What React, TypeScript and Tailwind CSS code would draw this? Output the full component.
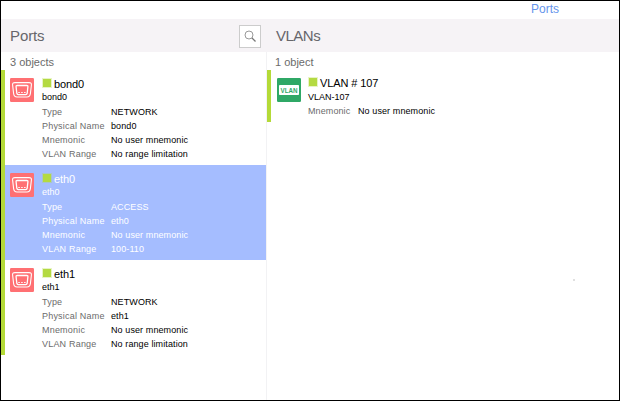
type Detail = { label: string; value: string };
type Item = { name: string; details: Detail[]; selected?: boolean };

const ports: Item[] = [
  {
    name: "bond0",
    details: [
      { label: "Type", value: "NETWORK" },
      { label: "Physical Name", value: "bond0" },
      { label: "Mnemonic", value: "No user mnemonic" },
      { label: "VLAN Range", value: "No range limitation" },
    ],
  },
  {
    name: "eth0",
    selected: true,
    details: [
      { label: "Type", value: "ACCESS" },
      { label: "Physical Name", value: "eth0" },
      { label: "Mnemonic", value: "No user mnemonic" },
      { label: "VLAN Range", value: "100-110" },
    ],
  },
  {
    name: "eth1",
    details: [
      { label: "Type", value: "NETWORK" },
      { label: "Physical Name", value: "eth1" },
      { label: "Mnemonic", value: "No user mnemonic" },
      { label: "VLAN Range", value: "No range limitation" },
    ],
  },
];

function PortIcon() {
  return (
    <svg className="mt-2 h-6 w-6 shrink-0" viewBox="0 0 24 24" fill="none">
      <rect width="24" height="24" rx="1.2" fill="#ff7073" />
      <path d="M5 4.600h14q2.700 0 2.400 2.400l-1 8.500q-.4 3.500-3.400 3.500H7q-3 0-3.400-3.500L2.600 7Q2.300 4.600 5 4.600Z" stroke="#fff" strokeWidth="1.100" />
      <path d="M7.200 7.500h9.600q1.200 0 1.100 1.200l-.7 6.500q-.2 1.400-1.500 1.400H8.300q-1.300 0-1.500-1.400l-.7-6.500Q6 7.500 7.200 7.500Z" stroke="#fff" strokeWidth="1.300" />
      <path d="M8.300 14.500h1.500M11.200 14.500h1.500M14.100 14.500h1.500" stroke="#fff" strokeWidth="1.200" />
    </svg>
  );
}

function VlanIcon() {
  return (
    <svg className="mt-2 h-6 w-6 shrink-0" viewBox="0 0 24 24">
      <rect width="24" height="24" rx="1.2" fill="#2fa866" />
      <rect x="2" y="7" width="20" height="10" rx=".8" fill="#fff" />
      <text x="12" y="14.700" textAnchor="middle" textLength="17" lengthAdjust="spacingAndGlyphs" fontSize="7.500" fontWeight="700" fontFamily="Liberation Sans, Arial, sans-serif" fill="#2fa866">VLAN</text>
    </svg>
  );
}

function Status() {
  return <span className="mb-[2px] mr-[3px] h-2 w-2 shrink-0 bg-[#b4da42] outline outline-1 outline-[#b4da42]/30" />;
}

function PortRow({ item }: { item: Item }) {
  const on = item.selected;
  return (
    <div className={`flex h-[95px] border-l-4 border-[#b4da38] pl-[5px] ${on ? "bg-[#a5bdff] text-white" : "text-black"}`}>
      <PortIcon />
      <div className="ml-[8px] pt-[8px]">
        <div className="flex h-3 items-center pl-[1px] text-[11px] leading-3">
          <Status />
          <span className="tracking-[-0.1px]">{item.name}</span>
        </div>
        <div className="h-[14px] text-[9px] leading-[14px]">{item.name}</div>
        <div className="mt-px grid grid-cols-[69px_auto] text-[9px] leading-[14px]">
          {item.details.map((d) => (
            <div key={d.label} className="contents">
              <span className={`whitespace-nowrap tracking-[0.2px] ${on ? "" : "text-[#6b6b6b]"}`}>{d.label}</span>
              <span className="whitespace-nowrap tracking-[0.1px]">{d.value}</span>
            </div>
          ))}
        </div>
      </div>
    </div>
  );
}

export default function App() {
  return (
    <div className="h-[402px] w-[620px] overflow-hidden bg-white font-['Liberation_Sans',Arial,sans-serif]">
      <div className="flex h-[401px] flex-col border border-black">
        <div className="flex h-[18px] justify-end pr-[60px] text-[12px] leading-4 text-[#6595ec]">Ports</div>
        <div className="flex h-[33px] shrink-0 items-center bg-[#f6f3f6] text-[15px] text-[#66666b]">
          <div className="flex w-[266px] items-center justify-between pl-[9px] pr-[6px]">
            <h1 className="pt-[2px] tracking-[-0.1px]">Ports</h1>
            <button className="mt-px flex h-[23px] w-[22px] items-center justify-center border border-[#ccc] bg-white">
              <svg className="h-3 w-3" viewBox="0 0 12 12" fill="none" stroke="#999" strokeWidth="1">
                <circle cx="5" cy="5" r="4" />
                <path d="m8 8 3.500 3.500" stroke="#777" strokeWidth="1.300" />
              </svg>
            </button>
          </div>
          <h2 className="pl-[9px] pt-[2px] tracking-[-0.5px]">VLANs</h2>
        </div>
        <div className="flex flex-1">
          <section className="w-[266px] border-r border-[#f2f2f4]">
            <div className="h-[18px] pl-[9px] pt-[2px] text-[11px] leading-4 text-[#6b6b6b]">3 objects</div>
            {ports.map((p) => (
              <PortRow key={p.name} item={p} />
            ))}
          </section>
          <section className="flex-1">
            <div className="h-[18px] pl-[8px] pt-[2px] text-[11px] leading-4 text-[#6b6b6b]">1 object</div>
            <div className="flex h-[52px] border-l-4 border-[#b4da38] pl-[6px] text-black">
              <VlanIcon />
              <div className="ml-[7px] pt-[7px]">
                <div className="flex h-3 items-center pl-[1px] text-[11px] leading-3">
                  <Status />
                  <span className="tracking-[-0.1px]">VLAN # 107</span>
                </div>
                <div className="mt-px h-[14px] text-[9px] leading-[14px]">VLAN-107</div>
                <div className="flex text-[9px] leading-[14px] tracking-[0.1px]">
                  <span className="w-[50px] text-[#6b6b6b]">Mnemonic</span>
                  <span>No user mnemonic</span>
                </div>
              </div>
            </div>
            <div className="ml-[306px] mt-[157px] h-[2px] w-[2px] bg-[#e0e0e0]" />
          </section>
        </div>
      </div>
    </div>
  );
}
